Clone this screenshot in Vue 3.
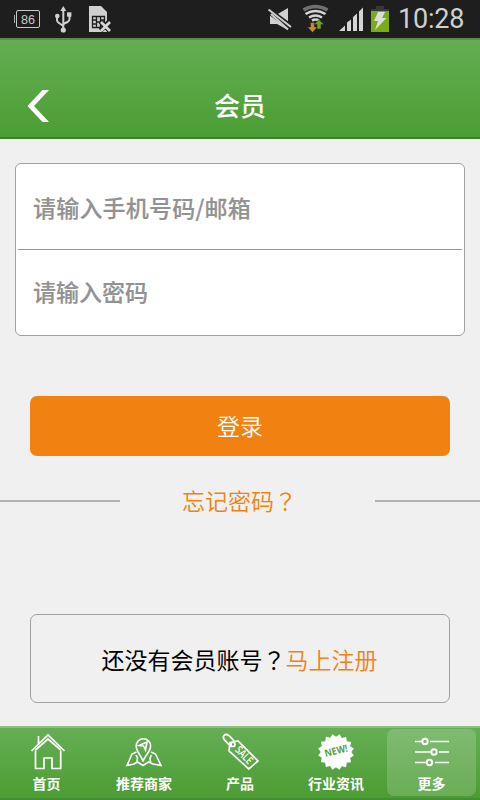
<script setup>
import { ref } from 'vue'

const account = ref('')
const password = ref('')
const active = ref('more')
const tabs = [
  { id: 'home', label: '首页' },
  { id: 'shops', label: '推荐商家' },
  { id: 'products', label: '产品' },
  { id: 'news', label: '行业资讯' },
  { id: 'more', label: '更多' },
]
const seal = Array.from({ length: 32 }, (_, i) => {
  const r = i % 2 ? 15.3 : 18.2
  const a = (i * Math.PI) / 16 + 0.2
  return `${(22 + r * Math.cos(a)).toFixed(2)},${(22 + r * Math.sin(a)).toFixed(2)}`
}).join(' ')
</script>

<template>
  <div class="screen">
    <div class="status">
      <svg class="status-left" width="120" height="38" viewBox="0 0 120 38">
        <rect x="16.5" y="10.5" width="23" height="17" rx="1.5" fill="none" stroke="#c8c8c8" />
        <path d="M14.5 15v8" stroke="#aaa" />
        <text x="21" y="24" font-size="12" textLength="14" lengthAdjust="spacingAndGlyphs" fill="#c8c8c8">86</text>
        <g stroke="#d0d0d0" stroke-width="2" fill="none">
          <path d="M63.3 10v20M57 16v4q0 2 2 3l4.3 3M69.5 15v4q0 2-2 3l-4.2 2" />
        </g>
        <g fill="#d0d0d0">
          <path d="M63.3 6l3 5h-6z" />
          <circle cx="63.3" cy="30" r="2.6" />
          <circle cx="57.3" cy="16" r="2.3" />
          <rect x="67" y="12.3" width="4.4" height="4.4" />
          <path d="M89 6h12l6 6v20H89z" />
        </g>
        <path d="M92.5 16.500h12v11h-12zM96.500 16.500v11M100.500 16.500v11M92.500 20h4M92.500 24h4M96.500 22h4M100.500 20h4" fill="none" stroke="#1e1e1e" stroke-width="1.300" />
        <path d="M100.500 21.500l9 9M109.500 21.500l-9 9" stroke="#1e1e1e" stroke-width="5" />
        <path d="M101 22l9 9M110 22l-9 9" stroke="#d8d8d8" stroke-width="2.700" />
      </svg>
      <svg class="status-right" width="130" height="38" viewBox="265 0 130 38">
        <path d="M270 15h6l12-7v22l-11-6h-7z" fill="#d0d0d0" />
        <path d="M269 11l23 17" stroke="#1e1e1e" stroke-width="6" />
        <path d="M268.500 9.500l22.500 17.500" stroke="#d0d0d0" stroke-width="2" />
        <path d="M271 14l17 15.500" stroke="#d0d0d0" stroke-width="2" />
        <g fill="none" stroke-width="2.600">
          <path d="M303.500 10q12-7 24 0" stroke="#707070" stroke-width="3.500" />
          <path d="M305.500 14q10-6 20 0M309 17.500q6.500-4 13 0M312 20.500q3.500-2 7 0" stroke="#d4d4d4" />
        </g>
        <path d="M310.500 22.500h4v4.500h3l-5 5.500-5-5.500h3z" fill="#d98225" stroke="#1e1e1e" stroke-width=".5" />
        <path d="M317 29v-4.500h-3l5-5 5 5h-3V29z" fill="#69a41c" stroke="#1e1e1e" stroke-width=".5" />
        <path d="M339 31l6-5.500V31zM347 31v-8.500l4-3V31zM353 31V17l4-3.500V31zM359 31V11.500l4-4V31z" fill="#d4d4d4" />
        <path d="M376 6h8v3h5v3h-18V9h5z" fill="#383838" />
        <rect x="371" y="11" width="18" height="21" fill="#79ad17" />
        <path d="M378 12h7l-3 6h4.500L375 30l3-9h-4z" fill="#ddd" />
      </svg>
      <span class="clock">10:28</span>
    </div>

    <header class="header">
      <button class="back" aria-label="返回">
        <svg width="24" height="34" viewBox="0 0 24 34"><path d="M15.500 1H22L7 17l15 16h-6.500L.500 17z" fill="#fff" /></svg>
      </button>
      <h1>会员</h1>
    </header>

    <main class="content">
      <form class="fields">
        <input v-model="account" class="account" type="text" placeholder="请输入手机号码/邮箱" />
        <div class="divider"></div>
        <input v-model="password" class="secret" type="password" placeholder="请输入密码" />
      </form>
      <button class="login">登录</button>
      <div class="forgot">
        <i class="rule left"></i>
        <a>忘记密码<span class="mark">？</span></a>
        <i class="rule right"></i>
      </div>
      <div class="register"><span>还没有会员账号<span class="mark">？</span></span><a>马上注册</a></div>
    </main>

    <nav class="tabs">
      <div v-for="t in tabs" :key="t.id" class="tab" :class="[t.id, { active: active === t.id }]" @click="active = t.id">
        <svg width="44" height="40" viewBox="0 0 44 40" fill="none" stroke="#fff" stroke-width="1.700">
          <template v-if="t.id === 'home'">
            <path d="M5.500 21L22 5l16.500 16M9.500 20.500V38.500h8.500V28h8v10.500h8.700V20.500M9.500 20L22 9 34.700 20M12.500 14V6" />
          </template>
          <template v-else-if="t.id === 'shops'">
            <path d="M21 31.500c-1-5-6.800-9.500-6.800-15.500a7.200 7.200 0 0 1 14.400 0c0 6-6.600 10.500-7.600 15.500zM14.500 22l-4.500 2L5 35.500l7-1.500 3.500-2 5.500 3.500 5.500-3.500 4.500 2 8 1.500L33.500 24l-4.500-2M14 25l1.500 3-.500 4M29.500 25L28 28l.5 4" stroke-width="1.600" />
            <path d="M17 15.500l8-3.500-1.500 8-2-4z" stroke-width="1.600" />
          </template>
          <template v-else-if="t.id === 'products'">
            <path d="M12 12.500l8-1.500 20 20-9.200 8L11 21z" />
            <path d="M13.500 17C10 13 3 8.500 6 5.500c3-3 6.500 1 11 7" />
            <circle cx="15" cy="14.500" r="2" />
            <text transform="translate(16.500 20.500) rotate(46)" fill="#fff" stroke="none" font-size="11" font-weight="600" textLength="20" lengthAdjust="spacingAndGlyphs">SALE</text>
          </template>
          <template v-else-if="t.id === 'news'">
            <polygon :points="seal" fill="#fff" stroke="none" />
            <text transform="translate(11.500 27) rotate(-14)" fill="#56a043" stroke="none" font-size="10" font-weight="700" textLength="23.500" lengthAdjust="spacingAndGlyphs">NEW!</text>
          </template>
          <template v-else>
            <path d="M5 11.500h6.500M20 11.500h19M5 22h15.500M29 22h10M5 32.500h11M25 32.500h14" />
            <g stroke-width="2"><circle cx="15" cy="11.500" r="2.700" /><circle cx="24" cy="22" r="2.700" /><circle cx="19.500" cy="32.500" r="2.700" /></g>
          </template>
        </svg>
        <span>{{ t.label }}</span>
      </div>
    </nav>
  </div>
</template>

<style>
body { background: #f0f0f0; }
</style>

<style scoped>
* { box-sizing: border-box; }
.screen { width: 480px; height: 800px; display: flex; flex-direction: column; background: #f0f0f0; overflow: hidden; font-family: "Noto Sans CJK SC", sans-serif; }
button { border: 0; padding: 0; font-family: inherit; }
.status { height: 38px; flex: none; background: #1e1e1e; display: flex; font-family: Roboto, sans-serif; }
.status-right { margin-left: 145px; }
.clock { font-size: 27px; line-height: 38px; color: #d0d0d0; font-weight: 400; margin-left: 3px; letter-spacing: -.2px; }
.header { height: 101px; flex: none; background: linear-gradient(#64ad52, #4b9e34); border-top: 2px solid #568f49; border-bottom: 2px solid #37832a; display: grid; grid-template-columns: 80px 1fr 80px; align-items: center; padding-top: 35px; }
.back { background: none; display: flex; padding-left: 27px; }
h1 { margin: 0; text-align: center; color: #fff; font-size: 26px; line-height: 36px; font-weight: 500; padding-bottom: 3px; }
.content { flex: 1; display: flex; flex-direction: column; padding-top: 24px; }
.fields { margin: 0 15px; height: 173px; flex: none; border: 1px solid #a0a0a0; border-radius: 6px; background: #fff; display: flex; flex-direction: column; padding: 0 2px; }
input { border: 0; outline: 0; background: none; width: 100%; height: 85px; padding: 0 15px; font-family: "Noto Sans CJK SC", sans-serif; font-weight: 500; font-size: 23px; }
.account { letter-spacing: .2px; }
.secret { padding-bottom: 4px; }
input::placeholder { color: #929292; opacity: 1; -webkit-text-stroke: .2px #929292; }
.divider { height: 1px; flex: none; background: #969696; }
.login { margin: 60px 30px 0; height: 60px; flex: none; border-radius: 7px; background: #f18212; color: #fff; font-size: 23px; padding-bottom: 2px; font-weight: 350; }
.forgot { margin-top: 27px; height: 36px; display: flex; align-items: center; justify-content: space-between; font-size: 23px; line-height: 36px; color: #f18212; font-weight: 350; }
.rule { height: 2px; background: #b2b2b2; }
.left { width: 120px; }
.right { width: 105px; }
.forgot a { margin-left: -16px; padding-bottom: 1px; height: 37px; margin-top: -1px; }
.mark { font-family: "Noto Sans CJK TC", sans-serif; }
.register { margin: 95px 30px 0; height: 89px; flex: none; border: 1px solid #a0a0a0; border-radius: 7px; display: flex; align-items: center; justify-content: center; color: #000; font-size: 23px; padding-right: 1px; }
.register a { color: #f18212; font-weight: 350; }
.tabs { height: 74px; flex: none; background: linear-gradient(#66ae55, #4b9d33); border-top: 2px solid #88c47a; border-bottom: 2px solid #438d32; display: grid; grid-template-columns: repeat(5, 96px); padding-top: 1px; }
.tab { display: flex; flex-direction: column; align-items: center; height: 67px; }
.tab svg { display: block; margin-top: 1px; }
.tab span { color: #fff; font-size: 14px; line-height: 20px; font-weight: 700; margin-top: 3px; }
.home span { margin-left: -3px; }
.tab text { font-family: "Open Sans", sans-serif; }
.status text { font-family: "Liberation Sans", sans-serif; }
.active { background: rgba(255, 255, 255, .17); border-radius: 7px; margin: 0 4px 0 3px; }
</style>
